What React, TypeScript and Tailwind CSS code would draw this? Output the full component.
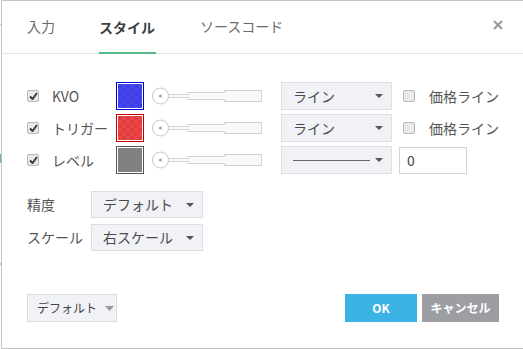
import React from "react";

const font = { fontFamily: '"Noto Sans CJK JP", "Noto Sans", sans-serif' };

function Check({ checked }: { checked: boolean }) {
  return (
    <div className="w-[12px] h-[12px] rounded-[2px] border border-[#b9b9b9] bg-[#e9e9e9] flex items-center justify-center">
      {checked && (
        <svg width="9" height="8" viewBox="0 0 9 8">
          <path d="M1 4.5 L3.5 7 L8 1" stroke="#3a3a3a" strokeWidth="2" fill="none" />
        </svg>
      )}
    </div>
  );
}

function Swatch({ border, fill, checker }: { border: string; fill: string; checker: boolean }) {
  const id = "p" + fill.replace("#", "");
  return (
    <div className="w-[28px] h-[28px] p-[1px] bg-white" style={{ border: `1px solid ${border}` }}>
      <svg width="24" height="24" className="block">
        <defs>
          <pattern id={id} width="8" height="8" patternUnits="userSpaceOnUse">
            <rect width="8" height="8" fill={fill} />
            {checker && <rect width="4" height="4" fill="#000" opacity="0.08" />}
            {checker && <rect x="4" y="4" width="4" height="4" fill="#000" opacity="0.08" />}
          </pattern>
        </defs>
        <rect width="24" height="24" fill={`url(#${id})`} />
      </svg>
    </div>
  );
}

function Slider() {
  return (
    <svg width="112" height="20" className="block">
      <path
        d="M17.5 8.5 H37.5 V6.5 H73.5 V4.5 H110.5 V15.5 H73.5 V13.5 H37.5 V11.5 H17.5 Z"
        fill="#f9f9f9"
        stroke="#d2d2d2"
      />
      <circle cx="9.5" cy="10" r="8" fill="#fff" stroke="#c6c6cc" />
      <circle cx="9.5" cy="10" r="1.6" fill="#a8a8a8" />
    </svg>
  );
}

function Arrow() {
  return (
    <svg width="8" height="4" className="block">
      <path d="M0 0 H8 L4 4 Z" fill="#555" />
    </svg>
  );
}

function Select({ label, w, h = 28 }: { label: React.ReactNode; w: number; h?: number }) {
  return (
    <div
      className="flex items-center justify-between pl-[11px] pr-[8px] bg-[#f1f2f6] border border-[#dcdee3] text-[14px] text-[#4a4a4a]"
      style={{ width: w, height: h }}
    >
      <span>{label}</span>
      <Arrow />
    </div>
  );
}

function Row({
  label,
  border,
  fill,
  checker,
  last,
}: {
  label: string;
  border: string;
  fill: string;
  checker: boolean;
  last?: boolean;
}) {
  return (
    <div className="flex items-center h-[28px]">
      <div className="w-[25px]" />
      <Check checked />
      <div className="w-[13px]" />
      <div className="w-[64px] text-[14px] text-[#555]">{label}</div>
      <Swatch border={border} fill={fill} checker={checker} />
      <div className="w-[7px]" />
      <Slider />
      <div className="w-[18px]" />
      {last ? (
        <>
          <Select
            w={111}
            label={<span className="block w-[77px] h-[1px] bg-[#666] mt-[1px]" />}
          />
          <div className="w-[7px]" />
          <div className="w-[68px] h-[27px] border border-[#d4d4d4] bg-white flex items-center pl-[7px] text-[14px] text-[#444]">
            0
          </div>
        </>
      ) : (
        <>
          <Select w={111} label="ライン" />
          <div className="w-[11px]" />
          <Check checked={false} />
          <div className="w-[14px]" />
          <span className="text-[14px] text-[#555]">価格ライン</span>
        </>
      )}
    </div>
  );
}

export default function App() {
  return (
    <div className="w-[523px] h-[349px] flex bg-white overflow-hidden" style={font}>
      <div className="w-[1px] flex flex-col">
        <div className="h-[24px]" />
        <div className="h-[1px] bg-[#ccc]" />
        <div className="h-[129px]" />
        <div className="h-[9px] bg-[#5bbf8a]" />
        <div className="h-[100px]" />
        <div className="h-[2px] bg-[#f1b0b8]" />
      </div>
      <div className="w-[522px] h-[349px] border-l border-t border-b border-[#c4c4c4] flex flex-col">
        <div className="h-[53px] border-b border-[#e0e3e8] flex items-end relative">
          <div className="w-[25px]" />
          <div className="pb-[14px] text-[14px] text-[#6b6b6b] border-b-2 border-transparent">入力</div>
          <div className="w-[44px]" />
          <div className="pb-[14px] text-[14px] font-bold text-[#3b3f46] border-b-2 border-[#53b987] w-[57px] -mb-[1px] pt-0">
            スタイル
          </div>
          <div className="w-[44px]" />
          <div className="pb-[14px] text-[14px] text-[#6b6b6b] border-b-2 border-transparent">ソースコード</div>
          <div className="flex-1" />
          <div className="self-start mt-[19px] mr-[20px]">
            <svg width="10" height="10">
              <path d="M1 1 L9 9 M9 1 L1 9" stroke="#9a9a9a" strokeWidth="2" />
            </svg>
          </div>
        </div>
        <div className="h-[28px]" />
        <div className="flex flex-col gap-[4px]">
          <Row label="KVO" border="#0000c8" fill="#4444f2" checker />
          <Row label="トリガー" border="#c80000" fill="#ee4444" checker />
          <Row label="レベル" border="#555" fill="#808080" checker={false} last />
        </div>
        <div className="h-[17px]" />
        <div className="flex flex-col gap-[6px]">
          <div className="flex items-center">
            <div className="w-[25px]" />
            <div className="w-[64px] text-[14px] text-[#555]">精度</div>
            <Select w={112} h={27} label="デフォルト" />
          </div>
          <div className="flex items-center">
            <div className="w-[25px]" />
            <div className="w-[64px] text-[14px] text-[#555]">スケール</div>
            <Select w={112} h={27} label="右スケール" />
          </div>
        </div>
        <div className="h-[43px]" />
        <div className="flex items-center">
          <div className="w-[25px]" />
          <div className="w-[90px] h-[28px] bg-[#f1f2f6] border border-[#dcdee3] flex items-center pl-[9px] gap-[8px] text-[12px] text-[#444]">
            <span>デフォルト</span>
            <svg width="9" height="5">
              <path d="M0 0 H9 L4.5 5 Z" fill="#999" />
            </svg>
          </div>
          <div className="flex-1" />
          <div className="w-[72px] h-[28px] bg-[#3bb3e4] text-white text-[12px] font-bold flex items-center justify-center">
            OK
          </div>
          <div className="w-[5px]" />
          <div className="w-[77px] h-[28px] bg-[#9c9ea3] text-white text-[12px] font-bold flex items-center justify-center">
            キャンセル
          </div>
          <div className="w-[24px]" />
        </div>
      </div>
    </div>
  );
}
